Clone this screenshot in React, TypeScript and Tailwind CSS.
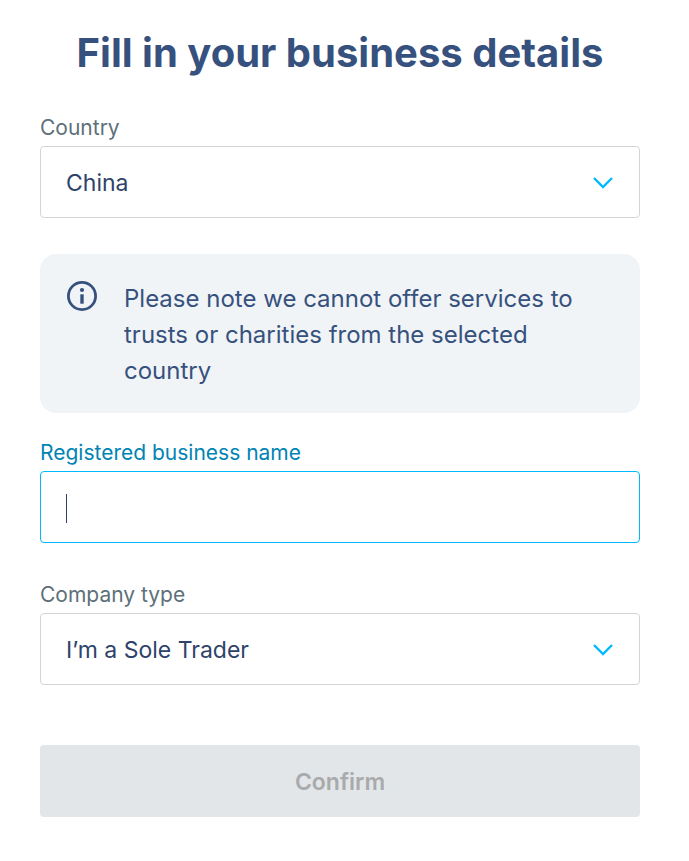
import React, { useState } from "react";

function Chevron() {
  return (
    <svg
      aria-hidden="true"
      viewBox="0 0 20 12"
      className="pointer-events-none absolute right-[27px] top-[31px] h-3 w-5"
      fill="none"
      stroke="#00b9ff"
      strokeWidth="2.4"
    >
      <path d="M1 1 L10 10 L19 1" />
    </svg>
  );
}

type SelectFieldProps = {
  id: string;
  label: string;
  options: string[];
};

function SelectField({ id, label, options }: SelectFieldProps) {
  return (
    <div>
      <label htmlFor={id} className="block h-8 text-[21px] leading-7 text-[#5d7079]">
        {label}
      </label>
      <div className="relative">
        <select
          id={id}
          className="block h-18 w-full appearance-none rounded border border-[#d3d5d8] bg-white pl-[25px] pr-16 pt-0.5 text-[23px] text-[#2e4369] outline-none"
        >
          {options.map((option) => (
            <option key={option}>{option}</option>
          ))}
        </select>
        <Chevron />
      </div>
    </div>
  );
}

export default function App() {
  const [name, setName] = useState("");

  return (
    <main className="bg-white pb-11 pl-10 pr-[49px] pt-7 font-['Inter',sans-serif]">
      <h1 className="text-center text-[40px] font-bold leading-[50px] text-[#37517e]">
        Fill in your business details
      </h1>
      <form className="mt-9" onSubmit={(event) => event.preventDefault()}>
        <SelectField id="country" label="Country" options={["China"]} />

        <div className="mt-9 flex gap-[26px] rounded-2xl bg-[#f0f4f7] pb-6 pl-[26px] pr-14 pt-[27px] text-[#37517e]">
          <svg aria-hidden="true" viewBox="0 0 32 32" className="h-8 w-8 shrink-0" fill="none">
            <circle cx="16" cy="15" r="13.6" stroke="currentColor" strokeWidth="2.8" />
            <circle cx="16" cy="9" r="2.1" fill="currentColor" />
            <path d="M16 13.3 V22.7" stroke="currentColor" strokeWidth="3.4" />
          </svg>
          <p className="text-2xl leading-9">
            Please note we cannot offer services to trusts or charities from the selected country
          </p>
        </div>

        <div className="mt-[26px]">
          <label htmlFor="business-name" className="block h-8 text-[21px] leading-7 text-[#0084b3]">
            Registered business name
          </label>
          <div className="relative">
            <input
              id="business-name"
              type="text"
              value={name}
              onChange={(event) => setName(event.target.value)}
              className="block h-18 w-full rounded border border-[#00b9ff] bg-white px-[25px] text-[23px] text-[#2e4369] caret-transparent outline-none"
            />
            {name === "" && (
              <span
                aria-hidden="true"
                className="pointer-events-none absolute left-[26px] top-[23px] h-[29px] w-px bg-[#2e4369]"
              />
            )}
          </div>
        </div>

        <div className="mt-[38px]">
          <SelectField id="company-type" label="Company type" options={["I’m a Sole Trader"]} />
        </div>

        <button
          type="submit"
          disabled
          className="mt-15 block h-18 w-full rounded bg-[#e2e6e8] pt-0.5 text-[23px] font-semibold text-[#a8aaac]"
        >
          Confirm
        </button>
      </form>
    </main>
  );
}
